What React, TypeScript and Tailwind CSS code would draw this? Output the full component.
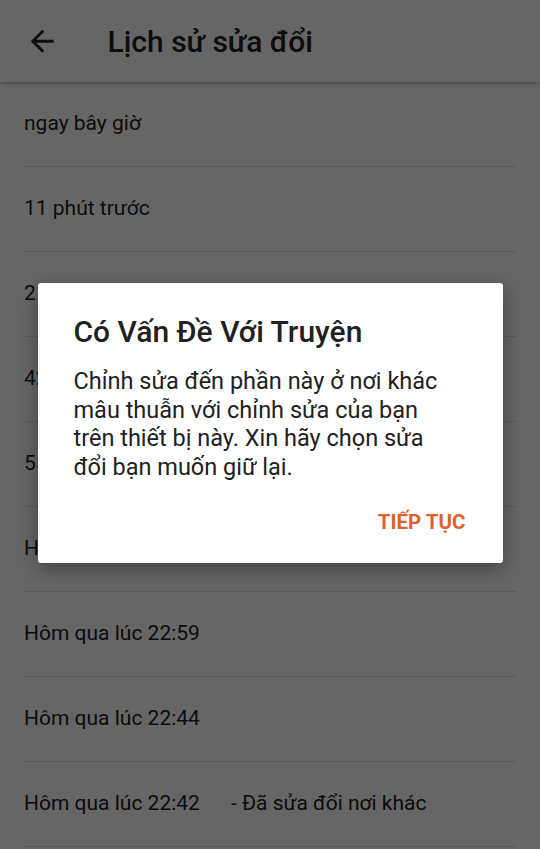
import { ReactNode } from "react";

// revision timestamps shown in the history list
const revisions: { label: string; note?: string }[] = [
	{ label: "ngay bây giờ" },
	{ label: "11 phút trước" },
	{ label: "21 phút trước" },
	{ label: "42 phút trước" },
	{ label: "55 phút trước" },
	{ label: "Hôm qua lúc 23:12" },
	{ label: "Hôm qua lúc 22:59" },
	{ label: "Hôm qua lúc 22:44" },
	{ label: "Hôm qua lúc 22:42", note: "- Đã sửa đổi nơi khác" },
	{ label: "Hôm qua lúc 22:30" },
];

const ArrowBack = () => (
	<svg viewBox="0 0 24 24" className="size-[34.5px] fill-[#212121]">
		<path d="M20 11H7.83l5.59-5.59L12 4l-8 8 8 8 1.41-1.41L7.83 13H20v-2z" />
	</svg>
);

const Row = ({ children }: { children: ReactNode }) => (
	<div className="mx-6 flex h-[85px] shrink-0 items-center border-b border-[#e2e2e2] text-[21px] text-[#212121]">
		{children}
	</div>
);

export default function App() {
	return (
		<div
			className="relative flex h-[849px] w-full flex-col overflow-hidden bg-white"
			style={{ fontFamily: "Roboto, 'Noto Sans', sans-serif" }}
		>
			<header className="relative z-10 flex h-[82px] shrink-0 items-center bg-white pl-[25px] shadow-[0_2px_4px_rgba(0,0,0,0.25)]">
				<ArrowBack />
				<h1 className="ml-[48px] text-[30px] font-medium text-[#212121]">Lịch sử sửa đổi</h1>
			</header>

			<div className="flex flex-col">
				{revisions.map((r) => (
					<Row key={r.label}>
						<span>{r.label}</span>
						{r.note && <span className="ml-[31px]">{r.note}</span>}
					</Row>
				))}
			</div>

			{/* scrim + conflict dialog */}
			<div className="absolute inset-0 z-20 flex items-center justify-center bg-black/60 pb-[3px]">
				<div className="flex h-[280px] w-[465px] flex-col rounded-[3px] bg-white pt-[32px] shadow-[0_6px_20px_rgba(0,0,0,0.35)]">
					<h2 className="px-[36px] text-[30px] leading-[34px] font-medium text-[#212121]">
						Có Vấn Đề Với Truyện
					</h2>
					<p className="mt-[18px] pr-[44px] pl-[36px] text-[23.5px] leading-[28.5px] text-[#212121]">
						Chỉnh sửa đến phần này ở nơi khác mâu thuẫn với chỉnh sửa của bạn trên thiết bị này. Xin hãy chọn sửa đổi bạn muốn giữ lại.
					</p>
					<div className="mt-[23px] flex justify-end pr-[29px]">
						<button className="h-[36px] px-2 text-[20.5px] font-bold text-[#e0622a]">TIẾP TỤC</button>
					</div>
				</div>
			</div>
		</div>
	);
}
